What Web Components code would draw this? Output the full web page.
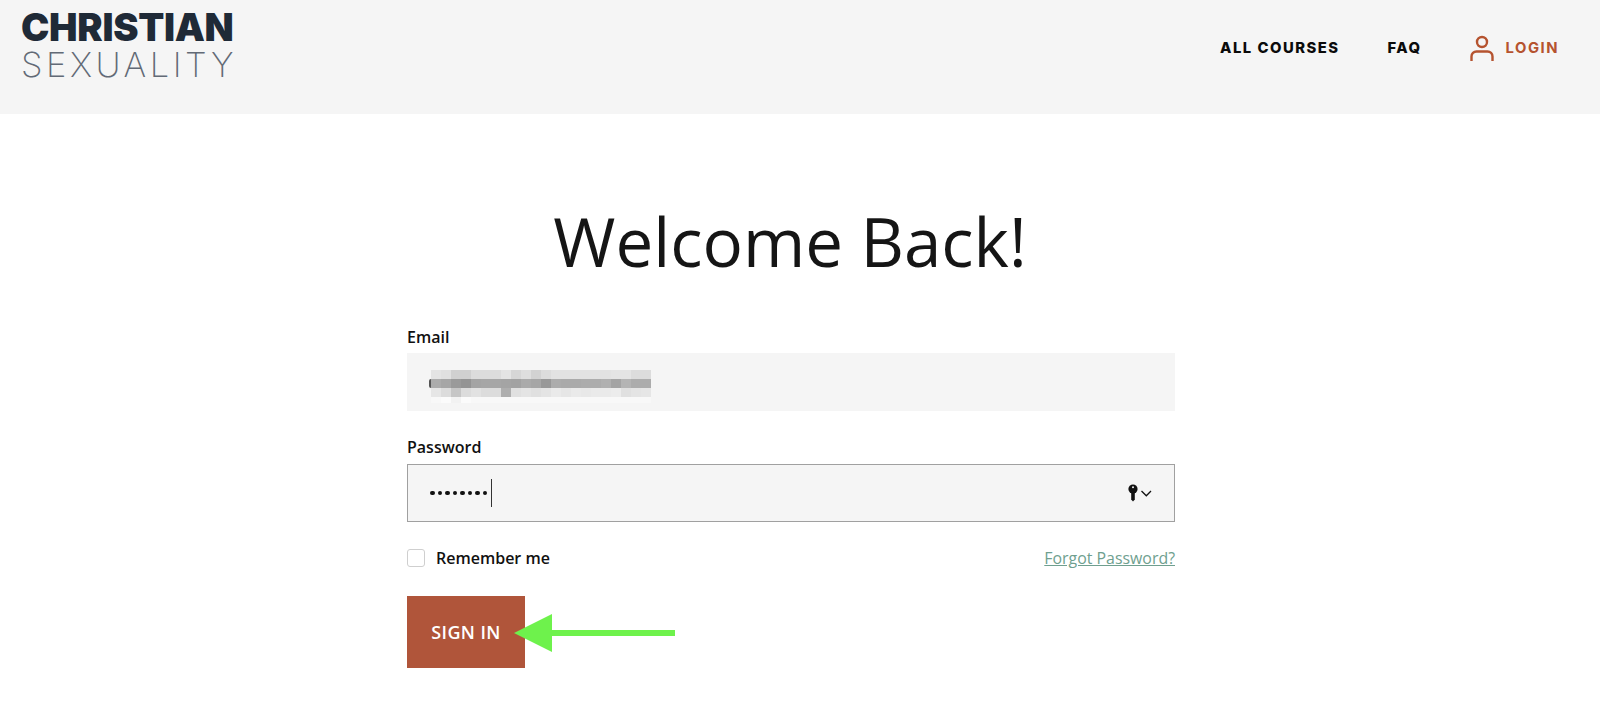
<!DOCTYPE html>
<html lang="en">
<head>
<meta charset="utf-8">
<title>Welcome Back!</title>
<style>
  html, body { margin: 0; background: #fff; }
  body { font-family: "Open Sans", sans-serif; color: #111; height: 708px; overflow: hidden; }
</style>
</head>
<body>
<site-header>
  <nav-link>ALL COURSES</nav-link>
  <nav-link>FAQ</nav-link>
  <nav-link accent>LOGIN</nav-link>
</site-header>
<login-form></login-form>

<script>
class SiteHeader extends HTMLElement {
    constructor() {
        super();
        this.attachShadow({mode: 'open'});
        this.shadowRoot.innerHTML = `
        <style>
            :host {
                display: flex;
                justify-content: space-between;
                align-items: flex-start;
                height: 114px;
                box-sizing: border-box;
                background: #f5f5f5;
                padding: 12px 41px 0 21px;
            }
            .logo {
                display: flex;
                flex-direction: column;
                font-family: Inter, sans-serif;
            }
            .top {
                font-size: 38px;
                font-weight: 900;
                line-height: 30px;
                color: #1f2a37;
                letter-spacing: -0.3px;
            }
            .bottom {
                font-size: 34.5px;
                font-weight: 200;
                line-height: 26px;
                margin-top: 10px;
                color: #626a76;
                letter-spacing: 3.55px;
            }
            nav {
                display: flex;
                align-items: center;
                gap: 48px;
                height: 71px;
            }
        </style>
        <div class="logo">
            <span class="top">CHRISTIAN</span>
            <span class="bottom">SEXUALITY</span>
        </div>
        <nav><slot></slot></nav>
        `;
    }
}

class NavLink extends HTMLElement {
    constructor() {
        super();
        this.attachShadow({mode: 'open'});
        this.shadowRoot.innerHTML = `
        <style>
            :host {
                display: inline-flex;
                align-items: center;
                gap: 12px;
                font-family: Inter, sans-serif;
                font-weight: 800;
                font-size: 14.8px;
                letter-spacing: 1.5px;
                color: #0b0b0b;
            }
            :host([accent]) { color: #b5532f; font-weight: 700; }
            svg { display: none; width: 24px; height: 26px; }
            :host([accent]) svg { display: block; }
        </style>
        <svg viewBox="0 0 24 26" fill="none" stroke="#b5532f" stroke-width="2.4">
            <circle cx="12" cy="7" r="5"/>
            <path d="M1.5 26v-4.5a5 5 0 0 1 5-5h11a5 5 0 0 1 5 5V26"/>
        </svg>
        <slot></slot>
        `;
    }
}

class BlurredValue extends HTMLElement {
    constructor() {
        super();
        this.attachShadow({mode: 'open'});
        // grey levels of the pixelated address, one string per row
        const rows = [
            'e4e0d0d0dcdcdce4d6ded2dce2e2e2e2e2e2e4e4dcdc',
            'aca69a94a4a6a6a4a2aaa698acaaaaacacb0a4b4acac',
            'e6dcc6dce2dcdcaee0e4e0e4eae6eae8eaeaece0e4e6',
            'f8fbf2fbf8f8f8f8f8f8f8f8f8f8f8f8f8f8f8f8f8f8'
        ];
        const cells = rows.map(row => row.match(/../g).map(v =>
            `<i style="background:#${v}${v}${v}"></i>`).join('')).join('');
        this.shadowRoot.innerHTML = `
        <style>
            :host {
                position: relative;
                display: grid;
                grid-template-columns: repeat(22, 10px);
                grid-template-rows: 9px 9px 9px 6px;
                margin: 9px 0 0 2px;
            }
            i { display: block; }
            .first {
                position: absolute;
                left: -2px;
                top: 9px;
                width: 2px;
                height: 9px;
                border-radius: 2px 0 0 2px;
                background: #555;
            }
        </style>
        ${cells}
        <b class="first"></b>
        `;
    }
}

class LoginField extends HTMLElement {
    constructor() {
        super();
        this.attachShadow({mode: 'open'});
        this.shadowRoot.innerHTML = `
        <style>
            :host {
                display: block;
                font-size: 16px;
            }
            label {
                display: block;
                font-weight: 600;
                line-height: 20px;
                margin-bottom: 6px;
                color: #111;
            }
            :host([focused]) label { margin-top: -1px; margin-bottom: 7px; }
            .box {
                display: flex;
                align-items: center;
                height: 58px;
                box-sizing: border-box;
                background: #f5f5f5;
                padding: 0 22px 0 22px;
            }
            :host([focused]) .box { border: 1px solid #a0a0a0; padding: 0 20px 0 22px; }
            .end { margin-left: auto; display: flex; align-items: center; }
        </style>
        <label><slot name="label"></slot></label>
        <div class="box">
            <slot></slot>
            <div class="end"><slot name="end"></slot></div>
        </div>
        `;
    }
}

class LoginForm extends HTMLElement {
    constructor() {
        super();
        this.attachShadow({mode: 'open'});
        this.shadowRoot.innerHTML = `
        <style>
            :host {
                display: block;
                width: 768px;
                margin-left: 407px;
            }
            h1 {
                margin: 81px 0 0;
                padding-right: 2px;
                font-size: 67.3px;
                font-weight: 400;
                line-height: 92px;
                text-align: center;
                color: #151515;
            }
            .fields {
                display: flex;
                flex-direction: column;
                gap: 27px;
                margin-top: 40px;
            }
            .dots {
                display: flex;
                align-items: center;
                gap: 3px;
            }
            .dots i {
                width: 4.5px;
                height: 4.5px;
                border-radius: 50%;
                background: #111;
            }
            .caret {
                width: 1px;
                height: 28px;
                background: #333;
                margin-left: 1px;
            }
            .row {
                display: flex;
                justify-content: space-between;
                align-items: center;
                margin-top: 26px;
                font-size: 16px;
                line-height: 20px;
            }
            .remember {
                display: flex;
                align-items: center;
                gap: 11px;
                font-weight: 600;
            }
            .check {
                width: 16px;
                height: 16px;
                border: 1px solid #cfcfcf;
                border-radius: 3px;
                background: #fff;
            }
            a {
                color: #6f9f8f;
                text-decoration: underline;
                font-size: 15.9px;
            }
            .submit {
                position: relative;
                margin-top: 28px;
            }
            button {
                display: block;
                width: 118px;
                height: 72px;
                border: 0;
                background: #b0553a;
                color: #fff;
                font: 600 18px "Open Sans", sans-serif;
                letter-spacing: 0.4px;
                padding: 0;
            }
            .arrow {
                position: absolute;
                left: 107px;
                top: 17px;
            }
        </style>
        <h1>Welcome Back!</h1>
        <div class="fields">
            <login-field>
                <span slot="label">Email</span>
                <blurred-value></blurred-value>
            </login-field>
            <login-field focused>
                <span slot="label">Password</span>
                <span class="dots"><i></i><i></i><i></i><i></i><i></i><i></i><i></i><i></i><span class="caret"></span></span>
                <svg slot="end" width="26" height="18" viewBox="0 0 26 18">
                    <circle cx="5" cy="5" r="4.6" fill="#111"/>
                    <circle cx="5" cy="3.2" r="1" fill="#f5f5f5"/>
                    <path d="M3.2 8h3.6v7.4L5 17.5l-1.8-2.1z" fill="#111"/>
                    <path d="M13.5 7l4.8 4.8L23 7" fill="none" stroke="#111" stroke-width="1.3"/>
                </svg>
            </login-field>
        </div>
        <div class="row">
            <span class="remember"><span class="check"></span>Remember me</span>
            <a href="#">Forgot Password?</a>
        </div>
        <div class="submit">
            <button>SIGN IN</button>
            <svg class="arrow" width="162" height="40" viewBox="0 0 162 40">
                <path d="M0 20L38 1v16h123v6H38v16z" fill="#6ef24c"/>
            </svg>
        </div>
        `;
    }
}

window.customElements.define('site-header', SiteHeader);
window.customElements.define('nav-link', NavLink);
window.customElements.define('blurred-value', BlurredValue);
window.customElements.define('login-field', LoginField);
window.customElements.define('login-form', LoginForm);
</script>
</body>
</html>
